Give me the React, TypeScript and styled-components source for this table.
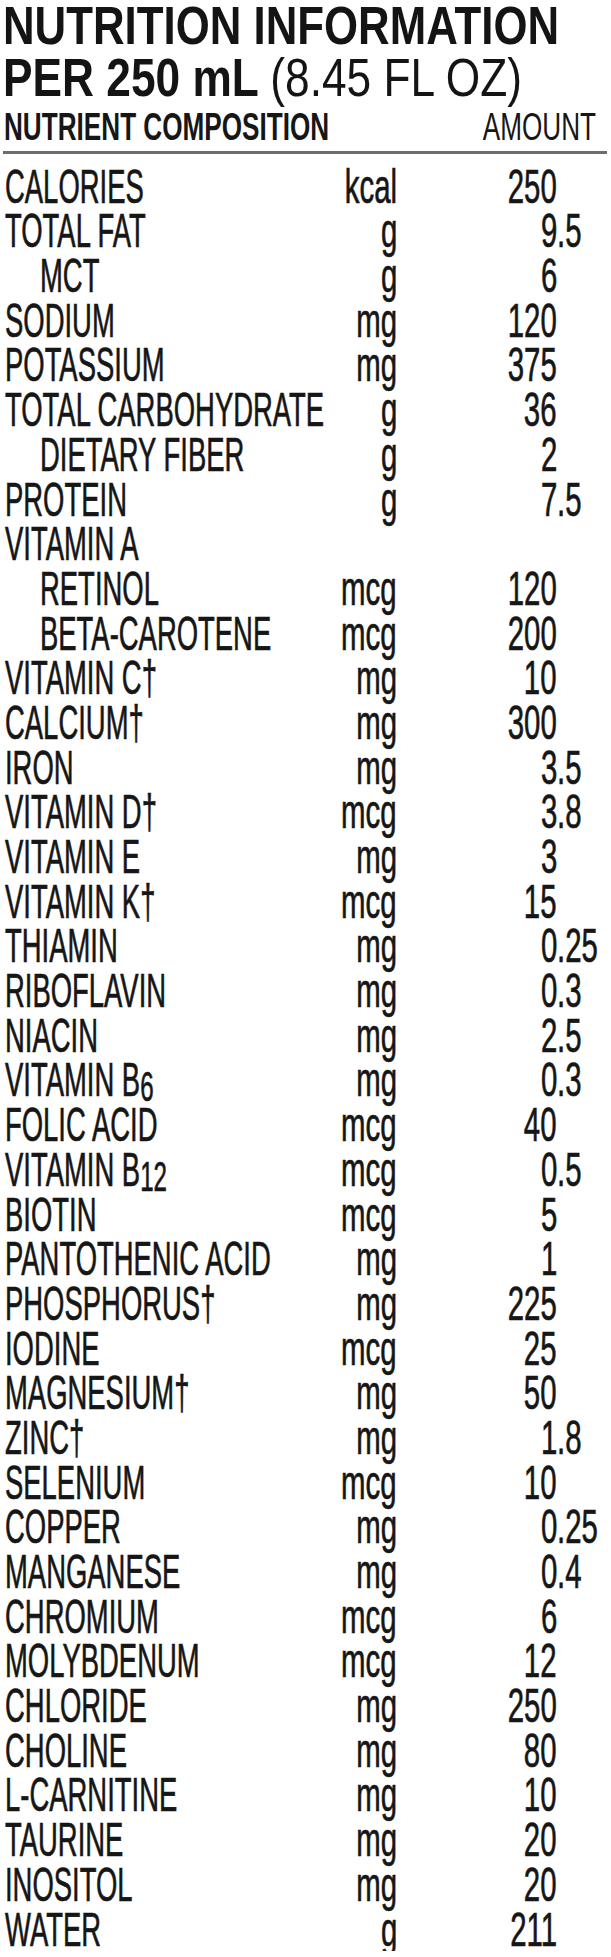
import React from "react";
import styled, { createGlobalStyle } from "styled-components";

type Nutrient = {
  name: string;
  sub?: string;
  unit?: string;
  amount?: string;
  indent?: boolean;
};

const NUTRIENTS: Nutrient[] = [
  { name: "CALORIES", unit: "kcal", amount: "250" },
  { name: "TOTAL FAT", unit: "g", amount: "9.5" },
  { name: "MCT", unit: "g", amount: "6", indent: true },
  { name: "SODIUM", unit: "mg", amount: "120" },
  { name: "POTASSIUM", unit: "mg", amount: "375" },
  { name: "TOTAL CARBOHYDRATE", unit: "g", amount: "36" },
  { name: "DIETARY FIBER", unit: "g", amount: "2", indent: true },
  { name: "PROTEIN", unit: "g", amount: "7.5" },
  { name: "VITAMIN A" },
  { name: "RETINOL", unit: "mcg", amount: "120", indent: true },
  { name: "BETA-CAROTENE", unit: "mcg", amount: "200", indent: true },
  { name: "VITAMIN C†", unit: "mg", amount: "10" },
  { name: "CALCIUM†", unit: "mg", amount: "300" },
  { name: "IRON", unit: "mg", amount: "3.5" },
  { name: "VITAMIN D†", unit: "mcg", amount: "3.8" },
  { name: "VITAMIN E", unit: "mg", amount: "3" },
  { name: "VITAMIN K†", unit: "mcg", amount: "15" },
  { name: "THIAMIN", unit: "mg", amount: "0.25" },
  { name: "RIBOFLAVIN", unit: "mg", amount: "0.3" },
  { name: "NIACIN", unit: "mg", amount: "2.5" },
  { name: "VITAMIN B", sub: "6", unit: "mg", amount: "0.3" },
  { name: "FOLIC ACID", unit: "mcg", amount: "40" },
  { name: "VITAMIN B", sub: "12", unit: "mcg", amount: "0.5" },
  { name: "BIOTIN", unit: "mcg", amount: "5" },
  { name: "PANTOTHENIC ACID", unit: "mg", amount: "1" },
  { name: "PHOSPHORUS†", unit: "mg", amount: "225" },
  { name: "IODINE", unit: "mcg", amount: "25" },
  { name: "MAGNESIUM†", unit: "mg", amount: "50" },
  { name: "ZINC†", unit: "mg", amount: "1.8" },
  { name: "SELENIUM", unit: "mcg", amount: "10" },
  { name: "COPPER", unit: "mg", amount: "0.25" },
  { name: "MANGANESE", unit: "mg", amount: "0.4" },
  { name: "CHROMIUM", unit: "mcg", amount: "6" },
  { name: "MOLYBDENUM", unit: "mcg", amount: "12" },
  { name: "CHLORIDE", unit: "mg", amount: "250" },
  { name: "CHOLINE", unit: "mg", amount: "80" },
  { name: "L-CARNITINE", unit: "mg", amount: "10" },
  { name: "TAURINE", unit: "mg", amount: "20" },
  { name: "INOSITOL", unit: "mg", amount: "20" },
  { name: "WATER", unit: "g", amount: "211" },
];

// title is set at 44px and stretched to the 53px cap height of the label
const TITLE_SY = 53 / 44;

const GlobalStyle = createGlobalStyle`
  html, body {
    margin: 0;
    background: #ffffff;
    overflow-x: hidden;
  }
  body {
    font-family: "Liberation Sans", Arial, sans-serif;
    color: #161616;
  }
`;

export default function App() {
  return (
    <>
      <GlobalStyle />
      <Label>
        <Title>
          <TitleLine>
            <Squeeze $sx={0.826 * TITLE_SY} $sy={TITLE_SY}>
              NUTRITION INFORMATION
            </Squeeze>
          </TitleLine>
          <TitleLine>
            <Squeeze $sx={0.835 * TITLE_SY} $sy={TITLE_SY}>
              PER 250 mL <Light>(8.45 FL OZ)</Light>
            </Squeeze>
          </TitleLine>
        </Title>
        <HeaderRow>
          <HeaderName>
            <Squeeze $sx={0.67}>NUTRIENT COMPOSITION</Squeeze>
          </HeaderName>
          <HeaderAmount>
            <Squeeze $sx={0.67} $origin="right">
              AMOUNT
            </Squeeze>
          </HeaderAmount>
        </HeaderRow>
        <Rule />
        <Rows>
          {NUTRIENTS.map((n, i) => {
            const [whole, frac] = (n.amount ?? "").split(".");
            return (
              <Row key={i}>
                <NameCell $indent={n.indent}>
                  <Squeeze $sx={0.56}>
                    {n.name}
                    {n.sub && <Sub>{n.sub}</Sub>}
                  </Squeeze>
                </NameCell>
                <UnitCell>
                  {n.unit && (
                    <Squeeze $sx={0.6} $origin="right">
                      {n.unit}
                    </Squeeze>
                  )}
                </UnitCell>
                <WholeCell>
                  {whole && (
                    <Squeeze $sx={0.6} $origin="right">
                      {whole}
                    </Squeeze>
                  )}
                </WholeCell>
                <FracCell>
                  {frac && <Squeeze $sx={0.6}>.{frac}</Squeeze>}
                </FracCell>
              </Row>
            );
          })}
        </Rows>
      </Label>
    </>
  );
}

const Label = styled.main`
  width: 611px;
  display: flex;
  flex-direction: column;
`;

const Squeeze = styled.span<{
  $sx: number;
  $sy?: number;
  $origin?: "left" | "right";
}>`
  display: inline-block;
  white-space: nowrap;
  transform: scale(${(p) => p.$sx}, ${(p) => p.$sy ?? 1});
  transform-origin: ${(p) => p.$origin ?? "left"} center;
`;

const Title = styled.h1`
  margin: 0;
  padding-left: 3px;
  font-size: 44px;
  line-height: 52px;
  font-weight: 700;
  color: #141414;
`;

const TitleLine = styled.div`
  white-space: nowrap;
  height: 52px;
`;

const Light = styled.span`
  font-weight: 400;
`;

const HeaderRow = styled.div`
  display: grid;
  grid-template-columns: 340px 1fr;
  margin-top: 2.5px;
  padding: 0 15.5px 0 4px;
  font-size: 39px;
  line-height: 40px;
`;

const HeaderName = styled.div`
  font-weight: 700;
  white-space: nowrap;
  min-width: 0;
`;

const HeaderAmount = styled.div`
  font-weight: 400;
  text-align: right;
  white-space: nowrap;
  min-width: 0;
`;

const Rule = styled.hr`
  margin: 4.5px 0 0 3px;
  width: 604px;
  height: 3px;
  border: 0;
  background: #6d6d6d;
`;

const Rows = styled.section`
  margin-top: 9.7px;
  display: flex;
  flex-direction: column;
`;

const Row = styled.div`
  display: grid;
  grid-template-columns: 300px 97px 160px 1fr;
  height: 44.7px;
  font-size: 49px;
  line-height: 44.7px;
  -webkit-text-stroke: 0.7px #161616;
`;

const NameCell = styled.div<{ $indent?: boolean }>`
  padding-left: ${(p) => (p.$indent ? "40px" : "4.6px")};
  white-space: nowrap;
  min-width: 0;
`;

const UnitCell = styled.div`
  text-align: right;
  white-space: nowrap;
  min-width: 0;
`;

const WholeCell = styled.div`
  text-align: right;
  white-space: nowrap;
  min-width: 0;
`;

const FracCell = styled.div`
  text-align: left;
  white-space: nowrap;
  min-width: 0;
`;

const Sub = styled.span`
  font-size: 0.88em;
  vertical-align: -5px;
  line-height: 0;
`;
